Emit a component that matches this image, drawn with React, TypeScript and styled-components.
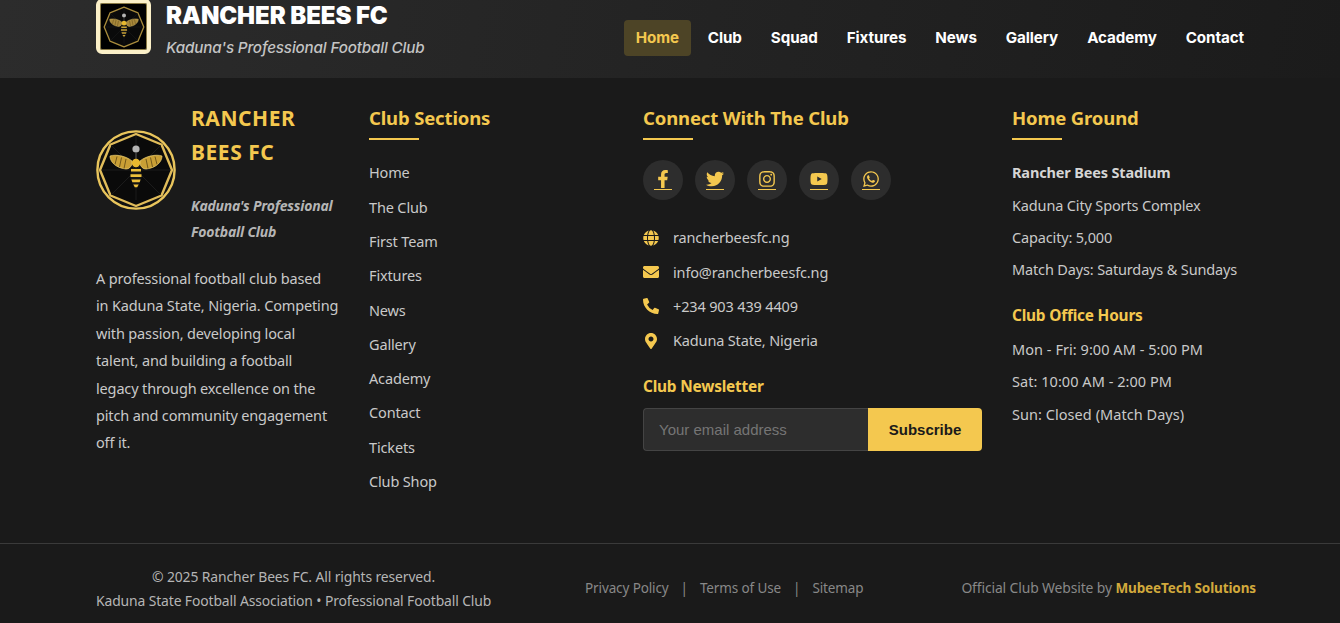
import React from "react";
import styled, { createGlobalStyle } from "styled-components";
import { FaFacebookF, FaTwitter, FaInstagram, FaYoutube, FaWhatsapp, FaGlobe, FaEnvelope, FaPhoneAlt, FaMapMarkerAlt } from "react-icons/fa";

const gold = "#f4c84f";
const Global = createGlobalStyle`
  html, body { margin: 0; padding: 0; background: #1a1a1a; height: 623px; overflow: hidden; }
  * { box-sizing: border-box; }
  body { font-family: "Noto Sans", "Open Sans", sans-serif; }
  ::placeholder { color: #757575; opacity: 1; }
`;

const Page = styled.div`width: 1340px; height: 623px; overflow: hidden; background: #1a1a1a;`;
const Header = styled.header`
  height: 78px; padding: 0 84px 0 96px; display: flex; justify-content: space-between; align-items: flex-start;
  background: linear-gradient(100deg, #2c2c2c 0%, #1b1b1b 100%);
`;
const Brand = styled.div`display: flex; gap: 15px; margin-top: -1px;`;
const BrandBadge = styled.div`
  width: 55px; height: 55px; border: 4px solid #fbf0c8; box-shadow: inset 0 0 0 1px #8a7a45; border-radius: 6px; background: #000;
  display: flex; align-items: center; justify-content: center;
`;
const BrandText = styled.div`font-family: Inter, sans-serif; margin-top: 2px;`;
const BrandTitle = styled.div`font-size: 24px; line-height: 30px; font-weight: 900; color: #fff; letter-spacing: -0.1px;`;
const BrandSub = styled.div`font-size: 15.2px; line-height: 20px; margin-top: 7px; font-style: italic; font-weight: 500; color: #c4c4c4; letter-spacing: -0.15px;`;
const Nav = styled.nav`display: flex; gap: 5px; margin-top: 20px;`;
const NavItem = styled.a<{ $active?: boolean }>`
  font-family: Inter, sans-serif; font-size: 15.2px; font-weight: 700; line-height: 36px; height: 36px; padding: 0 12px; border-radius: 4px;
  letter-spacing: -0.1px; color: ${p => (p.$active ? gold : "#fff")}; background: ${p => (p.$active ? "#4d4426" : "transparent")};
`;
const Columns = styled.div`
  display: grid; grid-template-columns: 243px 244px 339px 244px; column-gap: 30px; padding: 27px 0 0 96px; width: 1256px; height: 465px;
`;
const Col = styled.div`min-width: 0;`;
const ClubBlock = styled.div`display: flex; gap: 15px; align-items: flex-start; margin-top: -3px;`;
const ClubLogo = styled.div`margin-top: 28px; display: flex; flex: none;`;
const ClubText = styled.div`width: 150px;`;
const ClubName = styled.div`font-size: 21px; line-height: 33.5px; font-weight: 700; color: ${gold}; letter-spacing: 0.55px;`;
const ClubTag = styled.div`font-size: 14px; line-height: 26px; font-style: italic; font-weight: 700; color: #b5b5b5; margin-top: 24px; letter-spacing: -0.2px;`;
const About = styled.p`margin: 20px 0 0; font-size: 14.5px; line-height: 27.4px; color: #c9c9c9; letter-spacing: -0.15px; white-space: nowrap;`;
const Heading = styled.h3`
  margin: 0 0 20.4px; padding-bottom: 9px; font-size: 18.5px; line-height: 26px; font-weight: 700; color: ${gold}; position: relative; letter-spacing: -0.15px;
  &::after { content: ""; position: absolute; left: 0; bottom: 0; width: 50px; height: 2px; background: ${gold}; }
`;
const LinkList = styled.ul`list-style: none; margin: 0; padding: 0; display: flex; flex-direction: column; gap: 9.3px;`;
const LinkItem = styled.li`font-size: 14.5px; line-height: 25px; color: #c9c9c9; letter-spacing: -0.15px;`;
const Socials = styled.div`display: flex; gap: 12px; margin: 0.6px 0 25px;`;
const Social = styled.a`
  width: 40px; height: 40px; border-radius: 50%; background: #2d2d2d; display: flex; align-items: center; justify-content: center;
`;
const SocialGlyph = styled.span`
  display: flex; align-items: center; justify-content: center; color: ${gold}; font-size: 18px; height: 20px; border-bottom: 1px solid ${gold}; padding-bottom: 1px;
`;
const Contacts = styled.div`display: flex; flex-direction: column; gap: 9.3px;`;
const ContactRow = styled.div`display: flex; align-items: center; font-size: 14.5px; line-height: 25px; color: #c9c9c9; letter-spacing: -0.15px;`;
const ContactIcon = styled.span`width: 30px; color: ${gold}; font-size: 16px; display: flex; align-items: center;`;
const SubHead = styled.div`font-size: 15.4px; line-height: 22px; font-weight: 700; color: ${gold}; letter-spacing: -0.2px;`;
const Newsletter = styled(SubHead)`margin-top: 23px;`;
const SubForm = styled.div`display: flex; margin-top: 10px; height: 43px;`;
const EmailInput = styled.input`
  flex: 1; min-width: 0; border: 1px solid #444; border-right: 0; background: #2d2d2d; border-radius: 4px 0 0 4px; padding: 0 15px;
  font: 15px "Liberation Sans", Arial, sans-serif; color: #fff; outline: none;
`;
const SubButton = styled.button`
  width: 114px; border: 0; background: ${gold}; color: #1a1a1a; border-radius: 0 4px 4px 0; font: 700 15px "Liberation Sans", Arial, sans-serif;
`;
const InfoLine = styled.div<{ $strong?: boolean }>`
  font-size: 14.5px; line-height: 25px; margin-bottom: 7.2px; color: ${p => (p.$strong ? "#d5d5d5" : "#c9c9c9")}; font-weight: ${p => (p.$strong ? 700 : 400)}; letter-spacing: -0.15px;
`;
const HoursHead = styled(SubHead)`margin: 23px 0 9.6px;`;
const HoursLine = styled(InfoLine)`margin-bottom: 7.5px; letter-spacing: 0.05px;`;
const Bottom = styled.footer`border-top: 1px solid #3a3a3a; height: 80px; width: 1340px;`;
const BottomRow = styled.div`
  width: 1256px; padding: 8px 0 0 96px; height: 79px; display: flex; justify-content: space-between; align-items: center; font-size: 13.9px; letter-spacing: -0.12px;
`;
const Copy = styled.div`text-align: center; color: #b5b5b5; line-height: 24px; margin-top: 3px;`;
const Legal = styled.div`display: flex; gap: 12px; color: #888; font-size: 13.5px; margin-right: 4px;`;
const Credit = styled.div`color: #888;`;
const CreditName = styled.strong`color: #d1a93c; font-weight: 700; font-size: 13.5px;`;

const Bee = ({ size, ring }: { size: number; ring?: boolean }) => {
  const edge = ring ? "#e0bc5a" : "#a98c3c";
  const wing = ring ? "#c99f35" : "#a8883a";
  const band = ring ? "#edc03b" : "#c6a035";
  const wingShape = "M44 31C50 26 60 24 66 26C66 32 60 38 50 39C47 39 45 37 44 34Z";
  return (
    <svg width={size} height={size} viewBox="0 0 80 80" aria-hidden="true">
      {ring && <circle cx="40" cy="40" r="38.6" fill="#111" stroke="#e9c55c" strokeWidth="2.4" />}
      <polygon points="40,4 65.5,14.5 76,40 65.5,65.5 40,76 14.5,65.5 4,40 14.5,14.5" fill="#0a0a0a" stroke={edge} strokeWidth="2.4" strokeLinejoin="round" />
      <g stroke="#222" strokeWidth="0.7" fill="none">
        <path d="M40 6V70M15 15L65 65M65 15L15 65M6 40H74" />
      </g>
      <circle cx="40" cy="19" r="3.6" fill="#b4b4b4" />
      <path d="M40 22.5V29" stroke="#555" strokeWidth="1" />
      <g>
        <path d={wingShape} fill={wing} stroke="#f1d271" strokeWidth="0.7" />
        <path d="M50 29L52 38.5M54.5 27.5L56.5 37M59 26.5L61 34.5" stroke="#4c3a10" strokeWidth="0.7" />
      </g>
      <g transform="matrix(-1 0 0 1 80 0)">
        <path d={wingShape} fill={wing} stroke="#f1d271" strokeWidth="0.7" />
        <path d="M50 29L52 38.5M54.5 27.5L56.5 37M59 26.5L61 34.5" stroke="#4c3a10" strokeWidth="0.7" />
      </g>
      <circle cx="40" cy="33" r="4.2" fill="#e8b92f" />
      <path d="M35 38H45L45.6 46C45.6 51 42 57 40 60C38 57 34.4 51 34.4 46Z" fill="#151515" />
      <path d="M35 39H45V41.6H35ZM34.5 44.2H45.5V47H34.5ZM35.4 49.5H44.6L43.6 52.2H36.4ZM37.3 54.6H42.7L41.2 57.2H38.8Z" fill={band} />
    </svg>
  );
};

const navItems = ["Club", "Squad", "Fixtures", "News", "Gallery", "Academy", "Contact"];
const links = ["Home", "The Club", "First Team", "Fixtures", "News", "Gallery", "Academy", "Contact", "Tickets", "Club Shop"];
const socials = [FaFacebookF, FaTwitter, FaInstagram, FaYoutube, FaWhatsapp];
const contacts = [
  { Icon: FaGlobe, text: "rancherbeesfc.ng" },
  { Icon: FaEnvelope, text: "info@rancherbeesfc.ng" },
  { Icon: FaPhoneAlt, text: "+234 903 439 4409" },
  { Icon: FaMapMarkerAlt, text: "Kaduna State, Nigeria" },
];
const aboutLines = [
  "A professional football club based",
  "in Kaduna State, Nigeria. Competing",
  "with passion, developing local",
  "talent, and building a football",
  "legacy through excellence on the",
  "pitch and community engagement",
  "off it.",
];

export default function App() {
  return (
    <Page>
      <Global />
      <Header>
        <Brand>
          <BrandBadge><Bee size={44} /></BrandBadge>
          <BrandText>
            <BrandTitle>RANCHER BEES FC</BrandTitle>
            <BrandSub>Kaduna's Professional Football Club</BrandSub>
          </BrandText>
        </Brand>
        <Nav>
          <NavItem $active>Home</NavItem>
          {navItems.map(n => <NavItem key={n}>{n}</NavItem>)}
        </Nav>
      </Header>
      <Columns>
        <Col>
          <ClubBlock>
            <ClubLogo><Bee size={80} ring /></ClubLogo>
            <ClubText>
              <ClubName>RANCHER BEES FC</ClubName>
              <ClubTag>Kaduna's Professional Football Club</ClubTag>
            </ClubText>
          </ClubBlock>
          <About>{aboutLines.map(l => <React.Fragment key={l}>{l}<br /></React.Fragment>)}</About>
        </Col>
        <Col>
          <Heading>Club Sections</Heading>
          <LinkList>{links.map(l => <LinkItem key={l}>{l}</LinkItem>)}</LinkList>
        </Col>
        <Col>
          <Heading>Connect With The Club</Heading>
          <Socials>
            {socials.map((Icon, i) => <Social key={i}><SocialGlyph><Icon /></SocialGlyph></Social>)}
          </Socials>
          <Contacts>
            {contacts.map(({ Icon, text }) => <ContactRow key={text}><ContactIcon><Icon /></ContactIcon>{text}</ContactRow>)}
          </Contacts>
          <Newsletter>Club Newsletter</Newsletter>
          <SubForm>
            <EmailInput placeholder="Your email address" />
            <SubButton>Subscribe</SubButton>
          </SubForm>
        </Col>
        <Col>
          <Heading>Home Ground</Heading>
          <InfoLine $strong>Rancher Bees Stadium</InfoLine>
          <InfoLine>Kaduna City Sports Complex</InfoLine>
          <InfoLine>Capacity: 5,000</InfoLine>
          <InfoLine>Match Days: Saturdays &amp; Sundays</InfoLine>
          <HoursHead>Club Office Hours</HoursHead>
          <HoursLine>Mon - Fri: 9:00 AM - 5:00 PM</HoursLine>
          <HoursLine>Sat: 10:00 AM - 2:00 PM</HoursLine>
          <HoursLine>Sun: Closed (Match Days)</HoursLine>
        </Col>
      </Columns>
      <Bottom>
        <BottomRow>
          <Copy>© 2025 Rancher Bees FC. All rights reserved.<br />Kaduna State Football Association • Professional Football Club</Copy>
          <Legal><span>Privacy Policy</span><span>|</span><span>Terms of Use</span><span>|</span><span>Sitemap</span></Legal>
          <Credit>Official Club Website by <CreditName>MubeeTech Solutions</CreditName></Credit>
        </BottomRow>
      </Bottom>
    </Page>
  );
}
